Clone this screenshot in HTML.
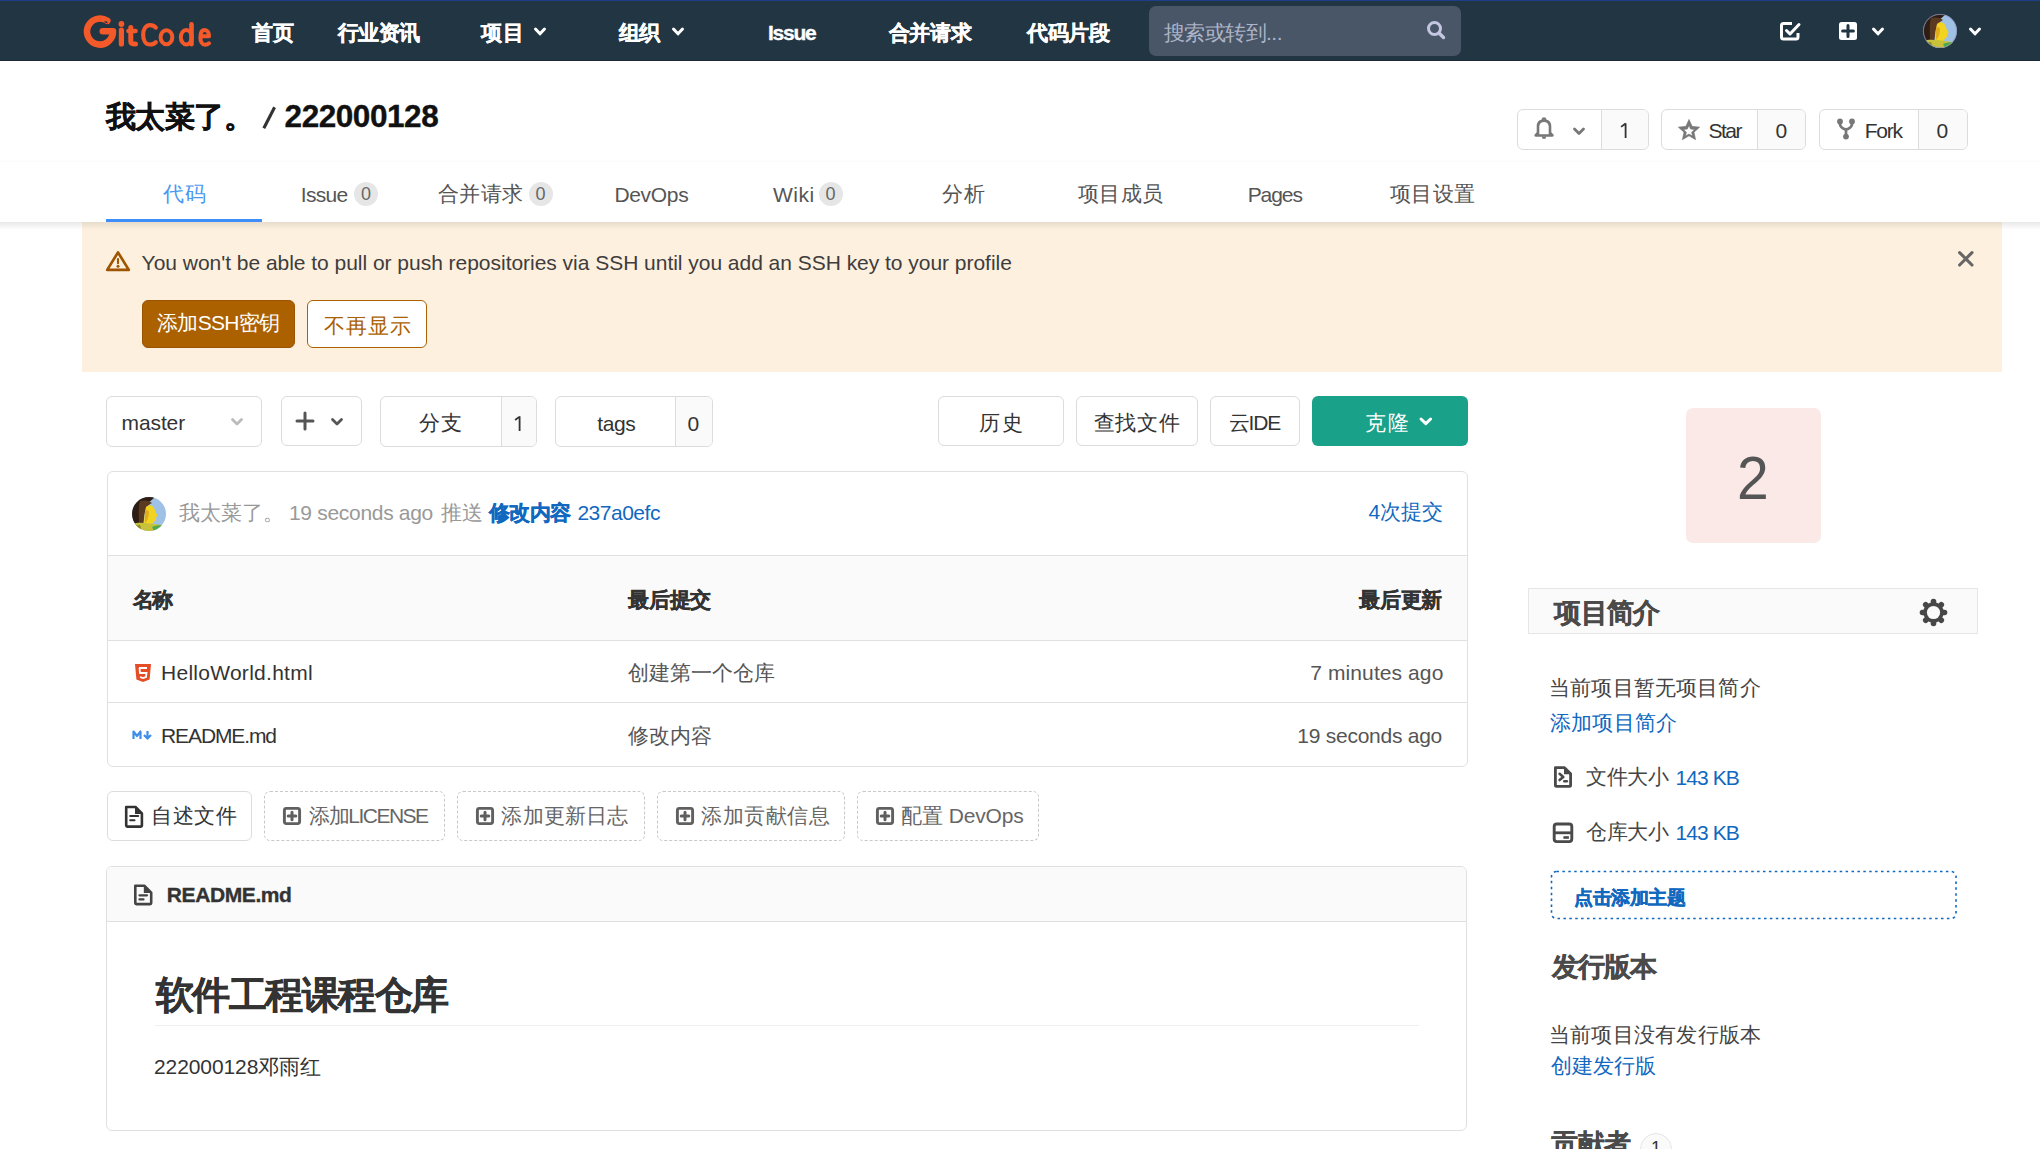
<!DOCTYPE html>
<html><head><meta charset="utf-8">
<style>
*{box-sizing:border-box}
html,body{margin:0;padding:0;width:2040px;height:1149px;overflow:hidden;background:#fff;font-family:"Liberation Sans",sans-serif}
.a{position:absolute}
.tx{position:absolute;white-space:nowrap}
.box{position:absolute;border:1.5px solid #dcdcdc;border-radius:6px;background:#fff}
.cnt{position:absolute;top:0;bottom:0;right:0;background:#fafafa;border-left:1.5px solid #dcdcdc;border-radius:0 5px 5px 0}
.dash{position:absolute;border:1.5px dashed #c8c8c8;border-radius:6px}
svg{position:absolute;overflow:visible}
</style></head><body>
<!-- NAV -->
<div class="a" style="left:0;top:0;width:2040px;height:61px;background:#223543"></div>
<div class="a" style="left:0;top:0;width:2040px;height:1px;background:#1d3f8a"></div>
<div class="a" style="left:0;top:60px;width:2040px;height:1px;background:#1b2836"></div>
<!-- logo -->
<svg style="left:0;top:0" width="240" height="61" viewBox="0 0 240 61">
 <g fill="none" stroke="#f4592a" stroke-linecap="round" stroke-linejoin="round">
  <path d="M107.3,20.8 A13,13 0 1 0 113,31.3 L102.8,31.3" stroke-width="6.6"/>
  <path d="M121.4,30 L121.4,44" stroke-width="5.2"/>
  <path d="M130.8,27.5 L130.8,41.5 C130.8,43.6 132.2,44 135.5,44" stroke-width="5"/>
  <path d="M128.5,31 L135.5,31" stroke-width="4.6"/>
  <path d="M155.8,27.6 C154.2,25.8 152,25.2 150,25.2 C145.5,25.2 143.2,29.8 143.2,34.9 C143.2,40 145.5,44.5 150,44.5 C152,44.5 154.2,43.9 155.8,42.2" stroke-width="4.2"/>
  <ellipse cx="166.45" cy="37.25" rx="5.85" ry="7.05" stroke-width="4"/>
  <ellipse cx="186.3" cy="37.25" rx="5.5" ry="7.25" stroke-width="4"/>
  <path d="M191.5,24.3 L191.5,44.3" stroke-width="4.6"/>
  <path d="M201,36.2 L209,36.2 C209,32.5 207.2,30 204.7,30 C201.7,30 200.4,33.5 200.4,37.4 C200.4,41.7 202.3,44.8 205.2,44.8 C206.8,44.8 208,44.2 209,43.3" stroke-width="4.1"/>
 </g>
 <circle cx="121.4" cy="24" r="2.9" fill="#f4592a"/>
 <path d="M103.5,22 L106.5,21 L108,23.5 Z" fill="#223543"/>
</svg>
<!-- nav chevrons -->
<svg style="left:0;top:0" width="2040" height="61">
 <g fill="none" stroke="#fff" stroke-width="3" stroke-linecap="round" stroke-linejoin="round">
  <path d="M535.5,29 L540,33.8 L544.5,29"/>
  <path d="M673.5,29 L678,33.8 L682.5,29"/>
  <path d="M1873.5,29 L1878,33.8 L1882.5,29"/>
  <path d="M1970.5,29 L1975,33.8 L1979.5,29"/>
 </g>
</svg>
<!-- search -->
<div class="a" style="left:1149px;top:6px;width:312px;height:50px;background:#485667;border-radius:7px"></div>
<svg style="left:0;top:0" width="2040" height="61">
 <circle cx="1434.5" cy="28.5" r="6" fill="none" stroke="#c3c6e0" stroke-width="3"/>
 <path d="M1439,33 L1443.5,37.5" stroke="#c3c6e0" stroke-width="3.4" stroke-linecap="round"/>
 <!-- todo -->
 <path d="M1792,23.5 L1783.5,23.5 Q1781.5,23.5 1781.5,25.5 L1781.5,37 Q1781.5,39 1783.5,39 L1796,39 Q1798,39 1798,37 L1798,33" fill="none" stroke="#fff" stroke-width="3"/>
 <path d="M1786.5,30.5 L1790,34 L1799,24.5" fill="none" stroke="#fff" stroke-width="3" stroke-linecap="round" stroke-linejoin="round"/>
 <!-- plus square -->
 <rect x="1839" y="22" width="18" height="18" rx="2.5" fill="#fff"/>
 <path d="M1848,25.6 L1848,36.4 M1842.6,31 L1853.4,31" stroke="#223543" stroke-width="3" stroke-linecap="round"/>
</svg>
<!-- avatar nav -->
<svg style="left:1923px;top:14px" width="34" height="34" viewBox="0 0 34 34">
 <clipPath id="clip1923"><circle cx="17" cy="17" r="17"/></clipPath>
 <g clip-path="url(#clip1923)">
  <rect width="34" height="34" fill="#9fc1e6"/>
  <path d="M0,0 L23,0 C21,2 18,4 15,7 C12,11 12,16 11,21 C10,26 9,30 8,34 L0,34 Z" fill="#2e1d14"/>
  <path d="M8,4 C12,3 17,3 20,6 C16,8 14,11 13,15 C12,19 12,24 11,28 L7,28 C7,20 6,10 8,4 Z" fill="#5b3a22"/>
  <path d="M14,10 C17,7 21,8 22,11 C23,13 23,14 24,16 C25,17.5 26,18 25.2,19 C24.5,19.6 24,20 24.2,21.5 C24.3,23 23,24 22,24.5 C21.5,26 20,27 18,27.5 L12,28 C12,24 12.5,18 13,15 Z" fill="#f2d31f"/>
  <path d="M13,14 C15,12 17,13 17,16 C17,20 15,24 13,26 Z" fill="#d89a1c" opacity="0.7"/>
  <path d="M0,27 C6,25 12,26 18,26.5 C24,27 28,28 34,29 L34,34 L0,34 Z" fill="#c8c23a"/>
  <path d="M20,30 C24,28 30,28 34,29 L34,34 L22,34 Z" fill="#52a84a"/>
  <path d="M2,29 L8,28 L10,34 L3,34 Z" fill="#8a8a20"/>
 </g>
 <circle cx="17" cy="17" r="16.6" fill="none" stroke="#8e90b8" stroke-width="0.8"/>
</svg>
<!-- title/header area -->
<div class="a" style="left:0;top:158.5px;width:2040px;height:3.5px;background:linear-gradient(rgba(0,0,0,0),rgba(0,0,0,0.018))"></div>
<svg style="left:0;top:0" width="300" height="150"><path d="M263.8,128.3 L274.6,107.2" stroke="#333" stroke-width="3.1" stroke-linecap="butt"/></svg>
<!-- notif group -->
<div class="box" style="left:1516.5px;top:109px;width:132px;height:40.5px"><div class="cnt" style="width:47px"></div></div>
<div class="box" style="left:1661px;top:109px;width:144.5px;height:40.5px"><div class="cnt" style="width:47.3px"></div></div>
<div class="box" style="left:1818.5px;top:109px;width:149px;height:40.5px"><div class="cnt" style="width:48.5px"></div></div>
<svg style="left:0;top:0" width="2040" height="160">
 <!-- bell -->
 <path fill-rule="evenodd" fill="#777" d="M1534.3,134.9 Q1534.3,136.8 1536.2,136.8 L1551.9,136.8 Q1553.8,136.8 1553.8,134.9 L1551.3,132.3 L1551.3,126.2 C1551.3,121.6 1548.4,119.3 1544,119.3 C1539.6,119.3 1536.7,121.6 1536.7,126.2 L1536.7,132.3 Z M1539.3,134.3 L1548.7,134.3 L1548.7,126.6 C1548.7,123.6 1546.8,121.9 1544,121.9 C1541.2,121.9 1539.3,123.6 1539.3,126.6 Z"/>
 <path d="M1542.4,117.5 L1545.6,117.5 L1546.6,119.8 L1541.4,119.8 Z" fill="#777"/>
 <path d="M1541.8,136.5 L1546.2,136.5 Q1546.2,139 1544,139 Q1541.8,139 1541.8,136.5 Z" fill="#777"/>
 <path d="M1574.5,129 L1579,133.5 L1583.5,129" fill="none" stroke="#777" stroke-width="2.8" stroke-linecap="round" stroke-linejoin="round"/>
 <!-- star -->
 <path fill-rule="evenodd" fill="#777" stroke="#777" stroke-width="0.6" stroke-linejoin="round" d="M1689.00,119.40 L1692.09,126.34 L1699.65,127.14 L1694.01,132.23 L1695.58,139.66 L1689.00,135.86 L1682.42,139.66 L1683.99,132.23 L1678.35,127.14 L1685.91,126.34 Z M1689.00,125.40 L1690.63,129.06 L1694.61,129.48 L1691.64,132.16 L1692.47,136.07 L1689.00,134.07 L1685.53,136.07 L1686.36,132.16 L1683.39,129.48 L1687.37,129.06 Z"/>
 <!-- fork -->
 <g fill="#777"><circle cx="1840" cy="121.4" r="2.9"/><circle cx="1852" cy="121.4" r="2.9"/><circle cx="1846" cy="136.6" r="2.9"/></g>
 <path d="M1840,121 L1840,124 Q1840,127.8 1846,129.6 Q1852,127.8 1852,124 L1852,121 M1846,129.4 L1846,136.6" fill="none" stroke="#777" stroke-width="2.7"/>
</svg>

<svg style="left:0;top:0" width="2040" height="460">
 <path d="M1621.1,126.9 L1625.6,123.5 M1625.6,123.2 L1625.6,138" fill="none" stroke="#333" stroke-width="1.8"/>
</svg>
<!-- tabs bar -->
<div class="a" style="left:106px;top:219px;width:156px;height:3px;background:#3d8ef8"></div>
<div class="a" style="left:354px;top:182px;width:23.6px;height:23.6px;border-radius:12px;background:#e6e6e6"></div>
<div class="a" style="left:528.7px;top:182px;width:24.3px;height:23.6px;border-radius:12px;background:#e6e6e6"></div>
<div class="a" style="left:819px;top:182px;width:23.8px;height:23.6px;border-radius:12px;background:#e6e6e6"></div>

<!-- alert -->
<div class="a" style="left:82px;top:222px;width:1920px;height:150px;background:#fdf0de"></div>
<div class="a" style="left:0;top:222px;width:2040px;height:8px;background:linear-gradient(rgba(0,0,0,0.085),rgba(0,0,0,0))"></div>
<svg style="left:0;top:222px" width="2040" height="150">
 <path d="M118,30.4 L128.8,47.9 L107.2,47.9 Z" fill="none" stroke="#9f5500" stroke-width="2.7" stroke-linejoin="round"/>
 <path d="M118,37 L118,41.2" stroke="#9f5500" stroke-width="2.1" stroke-linecap="round"/>
 <circle cx="118" cy="44.3" r="1.5" fill="#9f5500"/>
 <path d="M1959.6,30.6 L1972,43 M1972,30.6 L1959.6,43" stroke="#666" stroke-width="3.1" stroke-linecap="round"/>
</svg>
<div class="a" style="left:142px;top:300px;width:153px;height:48px;background:#ab6100;border:1px solid #9a5300;border-radius:6px"></div>
<div class="a" style="left:307px;top:300px;width:120px;height:48px;background:#fff;border:1.5px solid #ab6100;border-radius:6px"></div>

<!-- toolbar -->
<div class="box" style="left:106px;top:396px;width:156px;height:50.5px"></div>
<div class="box" style="left:280.5px;top:396px;width:81px;height:50px"></div>
<div class="box" style="left:380px;top:396px;width:156.5px;height:50.5px"><div class="cnt" style="width:34.5px"></div></div>
<div class="box" style="left:555px;top:396px;width:157.7px;height:50.5px"><div class="cnt" style="width:37px"></div></div>
<div class="box" style="left:938px;top:396px;width:125.5px;height:50px"></div>
<div class="box" style="left:1076px;top:396px;width:121.6px;height:50px"></div>
<div class="box" style="left:1210px;top:396px;width:89.5px;height:50px"></div>
<div class="a" style="left:1312px;top:396px;width:156px;height:50px;background:#1aa189;border-radius:6px"></div>
<svg style="left:0;top:380px" width="1500" height="80">
 <path d="M515.1,40 L519.6,36.6 M519.6,36.3 L519.6,51" fill="none" stroke="#333" stroke-width="1.8"/>
 <path d="M232.5,39.5 L237,44 L241.5,39.5" fill="none" stroke="#bbb" stroke-width="2.8" stroke-linecap="round" stroke-linejoin="round"/>
 <path d="M305,33 L305,49 M297,41 L313,41" stroke="#555" stroke-width="3" stroke-linecap="round"/>
 <path d="M332.5,39.5 L337,44 L341.5,39.5" fill="none" stroke="#555" stroke-width="2.8" stroke-linecap="round" stroke-linejoin="round"/>
 <path d="M1421,39 L1425.8,43.6 L1430.6,39" fill="none" stroke="#fff" stroke-width="3" stroke-linecap="round" stroke-linejoin="round"/>
</svg>

<!-- commit box -->
<div class="a" style="left:106.5px;top:470.8px;width:1361px;height:296.3px;border:1.5px solid #e0e0e0;border-radius:6px;overflow:hidden">
 <div class="a" style="left:0;top:83px;width:100%;height:86px;background:#fafafa;border-top:1.5px solid #e0e0e0;border-bottom:1.5px solid #e0e0e0"></div>
 <div class="a" style="left:0;top:229.9px;width:100%;height:1.5px;background:#e0e0e0"></div>
</div>
<svg style="left:132px;top:497px" width="34" height="34" viewBox="0 0 34 34">
 <clipPath id="clip132"><circle cx="17" cy="17" r="17"/></clipPath>
 <g clip-path="url(#clip132)">
  <rect width="34" height="34" fill="#9fc1e6"/>
  <path d="M0,0 L23,0 C21,2 18,4 15,7 C12,11 12,16 11,21 C10,26 9,30 8,34 L0,34 Z" fill="#2e1d14"/>
  <path d="M8,4 C12,3 17,3 20,6 C16,8 14,11 13,15 C12,19 12,24 11,28 L7,28 C7,20 6,10 8,4 Z" fill="#5b3a22"/>
  <path d="M14,10 C17,7 21,8 22,11 C23,13 23,14 24,16 C25,17.5 26,18 25.2,19 C24.5,19.6 24,20 24.2,21.5 C24.3,23 23,24 22,24.5 C21.5,26 20,27 18,27.5 L12,28 C12,24 12.5,18 13,15 Z" fill="#f2d31f"/>
  <path d="M13,14 C15,12 17,13 17,16 C17,20 15,24 13,26 Z" fill="#d89a1c" opacity="0.7"/>
  <path d="M0,27 C6,25 12,26 18,26.5 C24,27 28,28 34,29 L34,34 L0,34 Z" fill="#c8c23a"/>
  <path d="M20,30 C24,28 30,28 34,29 L34,34 L22,34 Z" fill="#52a84a"/>
  <path d="M2,29 L8,28 L10,34 L3,34 Z" fill="#8a8a20"/>
 </g>
 
</svg>
<svg style="left:0;top:640px" width="300" height="130">
 <!-- html5 -->
 <path d="M135,24 L151,24 L149.6,39.5 L143,42 L136.4,39.5 Z" fill="#e44d26"/>
 <path d="M139,28 L147,28 M139.5,28 L140,33 L146.5,33 L146,37 L143,38 L140,37" fill="none" stroke="#fff" stroke-width="1.8"/>
 <!-- markdown -->
 <path d="M133.5,99 L133.5,91.5 L137,96 L140.5,91.5 L140.5,99" fill="none" stroke="#3f8fe8" stroke-width="2.2" stroke-linejoin="round"/>
 <path d="M147.5,91 L147.5,97 M144,95 L147.5,98.6 L151,95" fill="none" stroke="#3f8fe8" stroke-width="2.2" stroke-linejoin="round"/>
</svg>

<!-- buttons row -->
<div class="box" style="left:106.5px;top:791px;width:145px;height:49.6px"></div>
<div class="dash" style="left:264px;top:791px;width:181px;height:49.6px"></div>
<div class="dash" style="left:457.4px;top:791px;width:187.3px;height:49.6px"></div>
<div class="dash" style="left:657.4px;top:791px;width:187.3px;height:49.6px"></div>
<div class="dash" style="left:857.4px;top:791px;width:181.4px;height:49.6px"></div>
<svg style="left:0;top:780px" width="1100" height="70">
 <path d="M126.2,27 L135.5,27 L141.9,33.4 L141.9,45.5 Q141.9,46.6 140.8,46.6 L127.3,46.6 Q126.2,46.6 126.2,45.5 Z" fill="none" stroke="#333" stroke-width="2.6" stroke-linejoin="round"/>
 <path d="M135,26.5 L142.4,33.9 L135,33.9 Z" fill="#333"/>
 <path d="M130.2,35.9 L138.2,35.9 M130.2,40.2 L134.5,40.2" stroke="#333" stroke-width="2" stroke-linecap="round"/>
 <g fill="none" stroke="#606060" stroke-width="2.9">
  <rect x="284.4" y="28.4" width="15.2" height="15.2" rx="2"/>
  <rect x="477.4" y="28.4" width="15.2" height="15.2" rx="2"/>
  <rect x="677.4" y="28.4" width="15.2" height="15.2" rx="2"/>
  <rect x="877.4" y="28.4" width="15.2" height="15.2" rx="2"/>
 </g>
 <g stroke="#606060" stroke-width="3" stroke-linecap="round">
  <path d="M292,32.2 L292,39.8 M288.2,36 L295.8,36"/>
  <path d="M485,32.2 L485,39.8 M481.2,36 L488.8,36"/>
  <path d="M685,32.2 L685,39.8 M681.2,36 L688.8,36"/>
  <path d="M885,32.2 L885,39.8 M881.2,36 L888.8,36"/>
 </g>
</svg>

<!-- readme box -->
<div class="a" style="left:106.4px;top:865.7px;width:1361.1px;height:265px;border:1.5px solid #e0e0e0;border-radius:6px;overflow:hidden">
 <div class="a" style="left:0;top:0;width:100%;height:55.8px;background:#fafafa;border-bottom:1.5px solid #e0e0e0"></div>
</div>
<div class="a" style="left:155px;top:1024.5px;width:1264px;height:1.5px;background:#eee"></div>
<svg style="left:0;top:860px" width="300" height="60">
 <path d="M135.3,25.7 L144.3,25.7 L151.2,32.6 L151.2,43 Q151.2,44.1 150.1,44.1 L136.4,44.1 Q135.3,44.1 135.3,43 Z" fill="none" stroke="#444" stroke-width="2.6" stroke-linejoin="round"/>
 <path d="M143.8,25.2 L151.7,33.1 L143.8,33.1 Z" fill="#444"/>
 <path d="M139.5,35.3 L147,35.3 M139.5,39.4 L143.5,39.4" stroke="#444" stroke-width="2.2" stroke-linecap="round"/>
</svg>

<!-- sidebar -->
<div class="a" style="left:1686px;top:408px;width:135px;height:135px;background:#fbe9e8;border-radius:7px"></div>
<div class="a" style="left:1528px;top:588px;width:450px;height:45.5px;background:#fafafa;border:1.5px solid #e6e6e6"></div>
<svg style="left:0;top:580px" width="2040" height="300">
 <!-- gear -->
 <g transform="translate(1933.5,32.5)" fill="#474747">
  <circle r="10.2"/>
  <rect x="-2.8" y="-13.8" width="5.6" height="7" rx="2.7" transform="rotate(0)"/><rect x="-2.8" y="-13.8" width="5.6" height="7" rx="2.7" transform="rotate(45)"/><rect x="-2.8" y="-13.8" width="5.6" height="7" rx="2.7" transform="rotate(90)"/><rect x="-2.8" y="-13.8" width="5.6" height="7" rx="2.7" transform="rotate(135)"/><rect x="-2.8" y="-13.8" width="5.6" height="7" rx="2.7" transform="rotate(180)"/><rect x="-2.8" y="-13.8" width="5.6" height="7" rx="2.7" transform="rotate(225)"/><rect x="-2.8" y="-13.8" width="5.6" height="7" rx="2.7" transform="rotate(270)"/><rect x="-2.8" y="-13.8" width="5.6" height="7" rx="2.7" transform="rotate(315)"/>
  <circle r="6.6" fill="#fafafa"/>
 </g>
 <!-- file code icon -->
 <path d="M1555.4,187.7 L1564.5,187.7 L1570.6,193.8 L1570.6,205.3 Q1570.6,206.4 1569.5,206.4 L1556.5,206.4 Q1555.4,206.4 1555.4,205.3 Z" fill="none" stroke="#4a4a4a" stroke-width="2.8" stroke-linejoin="round"/>
 <path d="M1564,187.2 L1571.1,194.3 L1564,194.3 Z" fill="#4a4a4a"/>
 <path d="M1559.6,193.8 L1563.3,196.9 L1559.6,200" fill="none" stroke="#4a4a4a" stroke-width="2.6" stroke-linecap="round" stroke-linejoin="round"/>
 <path d="M1564.3,201.3 L1566.8,201.3" stroke="#4a4a4a" stroke-width="2.6" stroke-linecap="round"/>
 <!-- repo icon -->
 <rect x="1554.2" y="244" width="17.6" height="17.6" rx="2.6" fill="none" stroke="#4a4a4a" stroke-width="2.9"/>
 <path d="M1554,252.8 L1572,252.8" stroke="#4a4a4a" stroke-width="2.8"/>
 <path d="M1563.4,257.5 L1568.9,257.5" stroke="#4a4a4a" stroke-width="2.6"/>
</svg>
<svg style="left:1550px;top:870px" width="408" height="50"><rect x="1.5" y="1.5" width="404.5" height="47" rx="5" fill="none" stroke="#1068bf" stroke-width="1.6" stroke-dasharray="2.5 3.4"/></svg>
<div class="a" style="left:1640px;top:1133px;width:32px;height:32px;border-radius:16px;border:1.5px solid #e5e5e5;background:#fafafa"></div>
<div class="tx" style="left:1651px;top:1136px;font-size:18px;line-height:24px;color:#333">1</div>

<div class="tx" id="t0" style="left:252.40px;top:21.78px;font-size:21.00px;line-height:21.00px;font-weight:700;color:#fff;letter-spacing:-0.400px;-webkit-text-stroke:0.35px;">首页</div>
<div class="tx" id="t1" style="left:337.50px;top:21.78px;font-size:21.00px;line-height:21.00px;font-weight:700;color:#fff;letter-spacing:-0.500px;-webkit-text-stroke:0.35px;">行业资讯</div>
<div class="tx" id="t2" style="left:481.20px;top:21.78px;font-size:21.00px;line-height:21.00px;font-weight:700;color:#fff;letter-spacing:0.800px;-webkit-text-stroke:0.35px;">项目</div>
<div class="tx" id="t3" style="left:619.00px;top:21.78px;font-size:21.00px;line-height:21.00px;font-weight:700;color:#fff;letter-spacing:-1.400px;-webkit-text-stroke:0.35px;">组织</div>
<div class="tx" id="t4" style="left:768.00px;top:21.89px;font-size:21.00px;line-height:21.00px;font-weight:700;color:#fff;letter-spacing:-1.250px;-webkit-text-stroke:0.35px;">Issue</div>
<div class="tx" id="t5" style="left:888.60px;top:21.88px;font-size:21.00px;line-height:21.00px;font-weight:700;color:#fff;letter-spacing:-0.200px;-webkit-text-stroke:0.35px;">合并请求</div>
<div class="tx" id="t6" style="left:1027.00px;top:21.88px;font-size:21.00px;line-height:21.00px;font-weight:700;color:#fff;letter-spacing:-0.333px;-webkit-text-stroke:0.35px;">代码片段</div>
<div class="tx" id="t7" style="left:1163.50px;top:21.88px;font-size:21.00px;line-height:21.00px;font-weight:400;color:#aeb4c8;letter-spacing:-0.500px;">搜索或转到...</div>
<div class="tx" id="t8" style="left:105.70px;top:101.70px;font-size:30.00px;line-height:30.00px;font-weight:700;color:#111;letter-spacing:-0.425px;-webkit-text-stroke:0.35px;">我太菜了。</div>
<div class="tx" id="t9" style="left:284.60px;top:101.34px;font-size:31.50px;line-height:31.50px;font-weight:700;color:#111;letter-spacing:-0.450px;-webkit-text-stroke:0.35px;">222000128</div>
<div class="tx" id="t10" style="left:1708.40px;top:119.99px;font-size:21.00px;line-height:21.00px;font-weight:400;color:#333;letter-spacing:-1.467px;">Star</div>
<div class="tx" id="t11" style="left:1775.50px;top:119.99px;font-size:21.00px;line-height:21.00px;font-weight:400;color:#333;letter-spacing:0.000px;">0</div>
<div class="tx" id="t12" style="left:1864.80px;top:119.99px;font-size:21.00px;line-height:21.00px;font-weight:400;color:#333;letter-spacing:-1.267px;">Fork</div>
<div class="tx" id="t13" style="left:1936.60px;top:119.99px;font-size:21.00px;line-height:21.00px;font-weight:400;color:#333;letter-spacing:0.000px;">0</div>
<div class="tx" id="t14" style="left:163.00px;top:182.58px;font-size:21.00px;line-height:21.00px;font-weight:400;color:#4a98f0;letter-spacing:0.700px;">代码</div>
<div class="tx" id="t15" style="left:300.80px;top:183.90px;font-size:21.00px;line-height:21.00px;font-weight:400;color:#555;letter-spacing:-0.700px;">Issue</div>
<div class="tx" id="t16" style="left:361.00px;top:185.41px;font-size:18.00px;line-height:18.00px;font-weight:400;color:#666;letter-spacing:0.000px;">0</div>
<div class="tx" id="t17" style="left:437.80px;top:182.58px;font-size:21.00px;line-height:21.00px;font-weight:400;color:#555;letter-spacing:0.400px;">合并请求</div>
<div class="tx" id="t18" style="left:535.60px;top:185.41px;font-size:18.00px;line-height:18.00px;font-weight:400;color:#666;letter-spacing:0.000px;">0</div>
<div class="tx" id="t19" style="left:614.40px;top:183.90px;font-size:21.00px;line-height:21.00px;font-weight:400;color:#555;letter-spacing:-0.320px;">DevOps</div>
<div class="tx" id="t20" style="left:773.00px;top:183.90px;font-size:21.00px;line-height:21.00px;font-weight:400;color:#555;letter-spacing:0.467px;">Wiki</div>
<div class="tx" id="t21" style="left:825.60px;top:185.41px;font-size:18.00px;line-height:18.00px;font-weight:400;color:#666;letter-spacing:0.000px;">0</div>
<div class="tx" id="t22" style="left:942.00px;top:182.58px;font-size:21.00px;line-height:21.00px;font-weight:400;color:#555;letter-spacing:1.300px;">分析</div>
<div class="tx" id="t23" style="left:1078.00px;top:182.58px;font-size:21.00px;line-height:21.00px;font-weight:400;color:#555;letter-spacing:0.333px;">项目成员</div>
<div class="tx" id="t24" style="left:1247.70px;top:183.90px;font-size:21.00px;line-height:21.00px;font-weight:400;color:#555;letter-spacing:-1.075px;">Pages</div>
<div class="tx" id="t25" style="left:1390.00px;top:182.58px;font-size:21.00px;line-height:21.00px;font-weight:400;color:#555;letter-spacing:0.333px;">项目设置</div>
<div class="tx" id="t26" style="left:141.60px;top:251.90px;font-size:21.00px;line-height:21.00px;font-weight:400;color:#3d3d3d;letter-spacing:-0.028px;">You won&#x27;t be able to pull or push repositories via SSH until you add an SSH key to your profile</div>
<div class="tx" id="t27" style="left:157.00px;top:312.48px;font-size:21.00px;line-height:21.00px;font-weight:400;color:#fff;letter-spacing:-0.667px;">添加SSH密钥</div>
<div class="tx" id="t28" style="left:324.30px;top:314.78px;font-size:21.00px;line-height:21.00px;font-weight:400;color:#ab6100;letter-spacing:0.767px;">不再显示</div>
<div class="tx" id="t29" style="left:121.60px;top:411.71px;font-size:21.00px;line-height:21.00px;font-weight:400;color:#333;letter-spacing:-0.120px;">master</div>
<div class="tx" id="t30" style="left:419.00px;top:412.48px;font-size:21.00px;line-height:21.00px;font-weight:400;color:#333;letter-spacing:1.400px;">分支</div>
<div class="tx" id="t31" style="left:597.30px;top:412.71px;font-size:21.00px;line-height:21.00px;font-weight:400;color:#333;letter-spacing:-0.433px;">tags</div>
<div class="tx" id="t32" style="left:687.50px;top:413.14px;font-size:21.00px;line-height:21.00px;font-weight:400;color:#333;letter-spacing:0.000px;">0</div>
<div class="tx" id="t33" style="left:979.00px;top:411.73px;font-size:21.00px;line-height:21.00px;font-weight:400;color:#333;letter-spacing:1.500px;">历史</div>
<div class="tx" id="t34" style="left:1093.70px;top:411.73px;font-size:21.00px;line-height:21.00px;font-weight:400;color:#333;letter-spacing:0.667px;">查找文件</div>
<div class="tx" id="t35" style="left:1228.50px;top:411.73px;font-size:21.00px;line-height:21.00px;font-weight:400;color:#333;letter-spacing:-1.067px;">云IDE</div>
<div class="tx" id="t36" style="left:1365.00px;top:411.73px;font-size:21.00px;line-height:21.00px;font-weight:400;color:#fff;letter-spacing:1.500px;">克隆</div>
<div class="tx" id="t37" style="left:179.40px;top:501.88px;font-size:21.00px;line-height:21.00px;font-weight:400;color:#999;letter-spacing:-0.100px;">我太菜了。</div>
<div class="tx" id="t38" style="left:289.00px;top:501.89px;font-size:21.00px;line-height:21.00px;font-weight:400;color:#999;letter-spacing:-0.308px;">19 seconds ago</div>
<div class="tx" id="t39" style="left:440.50px;top:501.88px;font-size:21.00px;line-height:21.00px;font-weight:400;color:#999;letter-spacing:0.200px;">推送</div>
<div class="tx" id="t40" style="left:489.00px;top:501.88px;font-size:21.00px;line-height:21.00px;font-weight:700;color:#1068bf;letter-spacing:-0.567px;-webkit-text-stroke:0.35px;">修改内容</div>
<div class="tx" id="t41" style="left:577.40px;top:501.89px;font-size:21.00px;line-height:21.00px;font-weight:400;color:#1068bf;letter-spacing:-0.486px;">237a0efc</div>
<div class="tx" id="t42" style="left:1368.60px;top:501.48px;font-size:21.00px;line-height:21.00px;font-weight:400;color:#1068bf;letter-spacing:-0.067px;">4次提交</div>
<div class="tx" id="t43" style="left:132.60px;top:588.88px;font-size:21.00px;line-height:21.00px;font-weight:700;color:#333;letter-spacing:-1.600px;-webkit-text-stroke:0.35px;">名称</div>
<div class="tx" id="t44" style="left:627.80px;top:588.88px;font-size:21.00px;line-height:21.00px;font-weight:700;color:#333;letter-spacing:-0.100px;-webkit-text-stroke:0.35px;">最后提交</div>
<div class="tx" id="t45" style="left:1359.40px;top:589.43px;font-size:21.00px;line-height:21.00px;font-weight:700;color:#333;letter-spacing:-0.333px;-webkit-text-stroke:0.35px;">最后更新</div>
<div class="tx" id="t46" style="left:161.00px;top:661.89px;font-size:21.00px;line-height:21.00px;font-weight:400;color:#333;letter-spacing:0.271px;">HelloWorld.html</div>
<div class="tx" id="t47" style="left:627.80px;top:661.78px;font-size:21.00px;line-height:21.00px;font-weight:400;color:#555;letter-spacing:0.083px;">创建第一个仓库</div>
<div class="tx" id="t48" style="left:1310.30px;top:661.89px;font-size:21.00px;line-height:21.00px;font-weight:400;color:#555;letter-spacing:0.092px;">7 minutes ago</div>
<div class="tx" id="t49" style="left:161.00px;top:724.60px;font-size:21.00px;line-height:21.00px;font-weight:400;color:#333;letter-spacing:-1.100px;">README.md</div>
<div class="tx" id="t50" style="left:627.80px;top:724.98px;font-size:21.00px;line-height:21.00px;font-weight:400;color:#555;letter-spacing:0.067px;">修改内容</div>
<div class="tx" id="t51" style="left:1297.30px;top:724.60px;font-size:21.00px;line-height:21.00px;font-weight:400;color:#555;letter-spacing:-0.254px;">19 seconds ago</div>
<div class="tx" id="t52" style="left:150.80px;top:805.08px;font-size:21.00px;line-height:21.00px;font-weight:400;color:#333;letter-spacing:0.733px;">自述文件</div>
<div class="tx" id="t53" style="left:309.30px;top:805.08px;font-size:21.00px;line-height:21.00px;font-weight:400;color:#666;letter-spacing:-1.513px;">添加LICENSE</div>
<div class="tx" id="t54" style="left:501.40px;top:805.08px;font-size:21.00px;line-height:21.00px;font-weight:400;color:#666;letter-spacing:0.120px;">添加更新日志</div>
<div class="tx" id="t55" style="left:701.40px;top:805.08px;font-size:21.00px;line-height:21.00px;font-weight:400;color:#666;letter-spacing:0.480px;">添加贡献信息</div>
<div class="tx" id="t56" style="left:901.40px;top:805.08px;font-size:21.00px;line-height:21.00px;font-weight:400;color:#666;letter-spacing:-0.175px;">配置 DevOps</div>
<div class="tx" id="t57" style="left:166.80px;top:884.04px;font-size:21.00px;line-height:21.00px;font-weight:700;color:#333;letter-spacing:-0.400px;-webkit-text-stroke:0.35px;">README.md</div>
<div class="tx" id="t58" style="left:156.00px;top:977.15px;font-size:37.50px;line-height:37.50px;font-weight:700;color:#333;letter-spacing:-1.529px;-webkit-text-stroke:0.35px;">软件工程课程仓库</div>
<div class="tx" id="t59" style="left:154.00px;top:1056.43px;font-size:21.00px;line-height:21.00px;font-weight:400;color:#333;letter-spacing:-0.091px;">222000128邓雨红</div>
<div class="tx" id="t60" style="left:1736.60px;top:446.94px;font-size:62.00px;line-height:62.00px;font-weight:400;color:#555;letter-spacing:0.000px;transform:scaleX(0.92);transform-origin:0 0;">2</div>
<div class="tx" id="t61" style="left:1554.40px;top:599.76px;font-size:27.00px;line-height:27.00px;font-weight:700;color:#4a4a4a;letter-spacing:-0.633px;-webkit-text-stroke:0.35px;">项目简介</div>
<div class="tx" id="t62" style="left:1549.00px;top:676.83px;font-size:21.00px;line-height:21.00px;font-weight:400;color:#444;letter-spacing:0.178px;">当前项目暂无项目简介</div>
<div class="tx" id="t63" style="left:1550.00px;top:711.58px;font-size:21.00px;line-height:21.00px;font-weight:400;color:#1068bf;letter-spacing:0.200px;">添加项目简介</div>
<div class="tx" id="t64" style="left:1586.00px;top:766.38px;font-size:21.00px;line-height:21.00px;font-weight:400;color:#444;letter-spacing:-0.333px;">文件大小</div>
<div class="tx" id="t65" style="left:1675.40px;top:767.39px;font-size:21.00px;line-height:21.00px;font-weight:400;color:#1068bf;letter-spacing:-0.880px;">143 KB</div>
<div class="tx" id="t66" style="left:1586.00px;top:821.38px;font-size:21.00px;line-height:21.00px;font-weight:400;color:#444;letter-spacing:-0.333px;">仓库大小</div>
<div class="tx" id="t67" style="left:1675.40px;top:822.39px;font-size:21.00px;line-height:21.00px;font-weight:400;color:#1068bf;letter-spacing:-0.880px;">143 KB</div>
<div class="tx" id="t68" style="left:1574.00px;top:888.50px;font-size:18.75px;line-height:18.75px;font-weight:700;color:#1068bf;letter-spacing:-0.400px;-webkit-text-stroke:0.35px;">点击添加主题</div>
<div class="tx" id="t69" style="left:1552.00px;top:953.86px;font-size:27.00px;line-height:27.00px;font-weight:700;color:#4a4a4a;letter-spacing:-0.900px;-webkit-text-stroke:0.35px;">发行版本</div>
<div class="tx" id="t70" style="left:1549.00px;top:1023.88px;font-size:21.00px;line-height:21.00px;font-weight:400;color:#444;letter-spacing:0.222px;">当前项目没有发行版本</div>
<div class="tx" id="t71" style="left:1551.00px;top:1055.33px;font-size:21.00px;line-height:21.00px;font-weight:400;color:#1068bf;letter-spacing:0.100px;">创建发行版</div>
<div class="tx" id="t72" style="left:1551.00px;top:1131.16px;font-size:27.00px;line-height:27.00px;font-weight:700;color:#4a4a4a;letter-spacing:-0.500px;-webkit-text-stroke:0.35px;">贡献者</div>
</body></html>
